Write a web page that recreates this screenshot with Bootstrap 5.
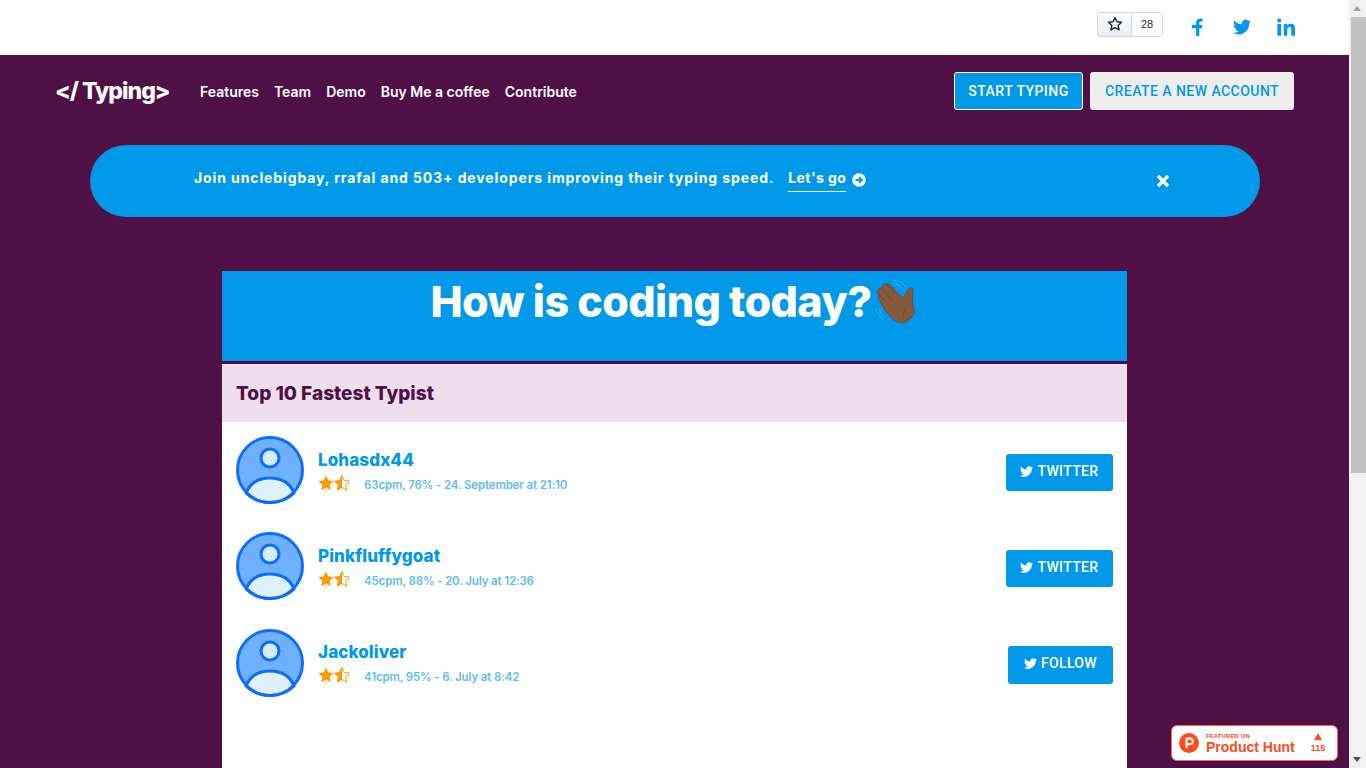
<!DOCTYPE html>
<html lang="en">
<head>
<meta charset="utf-8">
<title>Typing</title>
<link href="https://cdn.jsdelivr.net/npm/bootstrap@5.3.0/dist/css/bootstrap.min.css" rel="stylesheet">
<style>
body{background:#4f1046;font-family:Inter,"Liberation Sans",sans-serif;min-height:1236px}
.top-strip{height:55px;background:#fff;padding-right:71px}
.gh-widget{height:25px;width:66px;border:1px solid #d5d9dd;border-radius:3px;overflow:hidden;margin-right:25px;margin-top:-7px;font-family:"Liberation Sans",sans-serif;font-size:11px;color:#24292e}
.gh-star{width:34px;background:linear-gradient(#fafbfc,#e9eef2);border-right:1px solid #d5d9dd}
.gh-count{flex:1;background:#fff}
.social{width:18px;height:18px;fill:#0099ea}
.social-wrap{gap:26.5px;margin-top:-1px}
.main-nav{height:72px;padding:0 72px 0 55px}
.brand-name{font-family:Inter,sans-serif;font-weight:800;font-size:23px;color:#fff;letter-spacing:-1px;width:145px;white-space:nowrap}
.nav-item-link{font-weight:600;font-size:14px;color:#fff;text-decoration:none;white-space:nowrap}
.nav-links{gap:15px}
.cta{font-family:Roboto,sans-serif;font-weight:500;font-size:14px;letter-spacing:.45px;height:38px;border-radius:3px;display:flex;align-items:center;justify-content:center;text-decoration:none}
.cta-start{width:129px;background:#0099ea;border:1px solid #fff;color:#fff}
.cta-new{width:204px;background:#eeeeee;color:#0099ea;margin-left:7px}
.promo{margin:18px 0 0 90px;width:1170px;height:72px;background:#0099ea;border-radius:36px;color:#fff;padding-left:104px;position:relative}
.promo-text{font-weight:700;font-size:14px;letter-spacing:.89px;white-space:nowrap;margin-top:-3px}
.promo-link{display:inline-block;margin-left:10px;border-bottom:1px solid #fff;padding-bottom:3px;color:#fff;text-decoration:none;width:58px;white-space:nowrap;letter-spacing:.45px}
.promo-arrow{margin-left:2px;vertical-align:-4px}
.promo-close{position:absolute;left:1066px;top:29px;width:14px;height:14px}
.board{width:905px;margin:54px 0 0 222px;background:#fff;min-height:900px}
.board-head{height:90px;background:#0099ea;color:#fff;padding-top:5px}
.board-title{font-family:Inter,sans-serif;font-weight:800;font-size:43px;line-height:50px;letter-spacing:-.6px;margin:0;white-space:nowrap}
.wave{width:44px;height:46px;margin:2px 0 0 3px;flex:none}
.board-sep{height:3px;background:#470d4c}
.board-sub{height:58px;background:#efdeec;color:#4f1046;padding:2px 0 0 14px;font-weight:800;font-size:19px;letter-spacing:0}
.typist{height:96.3px;padding:0 14px}
.typist-avatar{width:68px;height:68px;flex:none;margin-right:14px}
.typist-name{color:#0099ea;font-weight:800;font-size:17px;line-height:22px;letter-spacing:.1px}
.typist-meta{color:#5fbcee;font-weight:600;font-size:11.5px;line-height:1;letter-spacing:-.14px;margin:5px 0 0 14px;white-space:nowrap}
.stars{width:32px;height:17px}
.tw-btn{font-family:Roboto,sans-serif;font-weight:500;font-size:14px;letter-spacing:.35px;height:37px;border-radius:3px;background:#0099ea;color:#fff;text-decoration:none;gap:4px;margin-top:4px;padding-bottom:2px}
.tw-twitter{width:107px}
.tw-follow{width:105px;height:38px}
.tw-icon{width:13px;height:13px;fill:#fff}
.ph-badge{position:fixed;left:1171px;top:725px;width:167px;height:36px;background:#fff;border:1px solid #ff6154;border-radius:6px;color:#ff4a1c;font-family:"Liberation Sans",sans-serif;font-weight:700}
.ph-logo{width:20px;height:20px;margin-left:7px;margin-right:7px;flex:none}
.ph-small{font-size:6px;line-height:7px;letter-spacing:.1px}
.ph-big{font-size:14px;line-height:14px;white-space:nowrap}
.ph-vote{font-size:9px;margin-left:16px;line-height:10px}
.ph-tri{width:0;height:0;border-left:4.5px solid transparent;border-right:4.5px solid transparent;border-bottom:7px solid #ff4a1c;margin:0 auto 3px}
.fake-scroll{position:fixed;top:0;right:0;bottom:0;width:17px;background:#f1f1f1}
.fake-thumb{position:absolute;top:17px;left:2px;right:0;height:456px;background:#c1c1c1}
.fake-up{position:absolute;top:6px;left:4px;border-left:4.500px solid transparent;border-right:4.500px solid transparent;border-bottom:5px solid #a3a3a3}
.fake-down{position:absolute;bottom:6px;left:4px;border-left:4.500px solid transparent;border-right:4.500px solid transparent;border-top:5px solid #505050}
</style>
</head>
<body>
<div class="top-strip d-flex justify-content-end align-items-center">
  <div class="gh-widget d-flex">
    <div class="gh-star d-flex align-items-center justify-content-center">
      <svg width="16" height="16" viewBox="0 0 16 16"><path d="M8 1.6l1.9 4.2 4.6.5-3.4 3.1 1 4.5L8 11.6l-4.1 2.3 1-4.5L1.5 6.3l4.6-.5z" fill="none" stroke="#24292e" stroke-width="1.4" stroke-linejoin="round"/></svg>
    </div>
    <div class="gh-count d-flex align-items-center justify-content-center">28</div>
  </div>
  <div class="social-wrap d-flex align-items-center">
    <svg class="social" viewBox="0 0 24 24"><path d="M15 24V13.5h3.600l.6-4.200H15V6.700c0-1.200.4-2 2.100-2h2.200V.9C18.900.8 17.600.7 16.200.7c-3.200 0-5.400 2-5.400 5.500v3.100H5.200v4.200h5.600V24z"/></svg>
    <svg class="social" viewBox="0 0 24 24"><path d="M24 4.600c-.9.400-1.800.7-2.800.8 1-.6 1.800-1.600 2.200-2.700-1 .6-2 1-3.100 1.200a4.900 4.900 0 0 0-8.400 4.500C7.800 8.200 4.100 6.200 1.700 3.200c-1.300 2.200-.7 5.100 1.500 6.600-.8 0-1.600-.2-2.200-.6 0 2.300 1.600 4.500 4 5-.7.200-1.500.2-2.200.1.600 2 2.500 3.400 4.600 3.400A9.900 9.900 0 0 1 0 19.700 14 14 0 0 0 21.500 7.300c1-.7 1.900-1.600 2.500-2.700z"/></svg>
    <svg class="social" viewBox="0 0 24 24"><path d="M.5 8h5v15.500h-5zM3 .5a2.800 2.800 0 1 1 0 5.600A2.800 2.800 0 0 1 3 .5zM9 8h4.700v2.100c.7-1.300 2.300-2.500 4.700-2.500 5 0 5.600 3.300 5.600 7.500v8.400h-5v-7.500c0-1.800 0-4.100-2.500-4.100s-2.800 2-2.800 4v7.600H9z"/></svg>
  </div>
</div>

<nav class="main-nav d-flex align-items-center">
  <div class="brand-name">&lt;/ Typing&gt;</div>
  <div class="nav-links d-flex">
    <a class="nav-item-link" href="#">Features</a>
    <a class="nav-item-link" href="#">Team</a>
    <a class="nav-item-link" href="#">Demo</a>
    <a class="nav-item-link" href="#">Buy Me a coffee</a>
    <a class="nav-item-link" href="#">Contribute</a>
  </div>
  <div class="ms-auto d-flex">
    <a class="cta cta-start" href="#">START TYPING</a>
    <a class="cta cta-new" href="#">CREATE A NEW ACCOUNT</a>
  </div>
</nav>

<div class="promo d-flex align-items-center">
  <div class="promo-text">Join unclebigbay, rrafal and 503+ developers improving their typing speed. <a class="promo-link" href="#">Let's go</a>
    <svg class="promo-arrow" width="14" height="14" viewBox="0 0 14 14"><circle cx="7" cy="7" r="6.800" fill="#fff"/><path d="M3.500 7h6M7 4.200L9.800 7 7 9.800" fill="none" stroke="#0099ea" stroke-width="2"/></svg>
  </div>
  <svg class="promo-close" viewBox="0 0 14 14"><path d="M2 2l10 10M12 2L2 12" stroke="#fff" stroke-width="3.200"/></svg>
</div>

<main class="board">
  <div class="board-head d-flex justify-content-center align-items-start">
    <h1 class="board-title">How is coding today?</h1>
    <svg class="wave" viewBox="0 0 44 46">
      <path d="M15.700 2C22 2 28 5 30.700 9M.7 30.300C2 35 5 39 9 42M18 5.500C21.500 6 25 8 27 10.500M4 31C5 34 7 37 9.500 38.500" fill="none" stroke="#2bb5d8" stroke-width="1"/>
      <path d="M2.500 14C3 11 5 10 6.500 10 7 7 10 5 12.500 6 14 6 15 7 16 8L26 18.500C28 20 29 19 30 17 31.500 14 33 10.500 35.500 10 37.500 9.500 38 11 38 13 37.500 19 37 24 38 28 39 31 40 32 39.500 34 38.500 38 34 43 29 44.500 24 45 20 43 17 40 13 36 9 31 7 27 5 24 3.500 19 2.500 14z" fill="#85593a" stroke="#6b4528" stroke-width=".8"/>
      <path d="M6.500 10L17 21.500M3.500 16L13 25.500M12 6.500L21.500 17M31 30C29 33 28 35 28 38" fill="none" stroke="#6b4528" stroke-width=".8"/>
    </svg>
  </div>
  <div class="board-sep"></div>
  <div class="board-sub d-flex align-items-center">Top 10 Fastest Typist</div>

  <div class="typist d-flex align-items-center">
    <svg class="typist-avatar" viewBox="0 0 68 68"><circle cx="34" cy="34" r="32.500" fill="#6fb1ff"/><path d="M10 57c4-10 13-15 24-15s20 5 24 15c-6 6-15 9.500-24 9.500S16 63 10 57z" fill="#e0f1fe" stroke="#0d6efd" stroke-width="3"/><circle cx="34" cy="22" r="9" fill="#d7edfe" stroke="#0d6efd" stroke-width="3"/><circle cx="34" cy="34" r="32.500" fill="none" stroke="#0d6efd" stroke-width="3"/></svg>
    <div>
      <div class="typist-name">Lohasdx44</div>
      <div class="d-flex align-items-center mt-1">
        <svg class="stars" viewBox="0 0 32 17"><path d="M8 .5l2.300 5 5.400.6-4 3.700 1.100 5.400L8 12.500l-4.800 2.700 1.100-5.400-4-3.700 5.400-.6z" fill="#ff9800"/><path d="M24 .5l2.300 5 5.200.6-3.900 3.700 1 5.200L24 12.500l-4.600 2.500 1-5.200-3.900-3.700 5.200-.6z" fill="#fff" stroke="#ff9800"/><path d="M24 .5v12l-4.600 2.500 1-5.200-3.900-3.700 5.200-.6z" fill="#ff9800"/></svg>
        <span class="typist-meta">63cpm, 76% - 24. September at 21:10</span>
      </div>
    </div>
    <a class="tw-btn tw-twitter ms-auto d-flex align-items-center justify-content-center" href="#"><svg class="tw-icon" viewBox="0 0 24 24"><path d="M24 4.600c-.9.400-1.800.7-2.800.8 1-.6 1.800-1.600 2.200-2.700-1 .6-2 1-3.100 1.200a4.900 4.900 0 0 0-8.400 4.500C7.800 8.200 4.100 6.200 1.700 3.200c-1.300 2.200-.7 5.100 1.500 6.600-.8 0-1.600-.2-2.200-.6 0 2.300 1.600 4.500 4 5-.7.200-1.500.2-2.200.1.600 2 2.500 3.400 4.600 3.400A9.900 9.900 0 0 1 0 19.700 14 14 0 0 0 21.500 7.300c1-.7 1.900-1.600 2.500-2.700z"/></svg>TWITTER</a>
  </div>

  <div class="typist d-flex align-items-center">
    <svg class="typist-avatar" viewBox="0 0 68 68"><circle cx="34" cy="34" r="32.500" fill="#6fb1ff"/><path d="M10 57c4-10 13-15 24-15s20 5 24 15c-6 6-15 9.500-24 9.500S16 63 10 57z" fill="#e0f1fe" stroke="#0d6efd" stroke-width="3"/><circle cx="34" cy="22" r="9" fill="#d7edfe" stroke="#0d6efd" stroke-width="3"/><circle cx="34" cy="34" r="32.500" fill="none" stroke="#0d6efd" stroke-width="3"/></svg>
    <div>
      <div class="typist-name">Pinkfluffygoat</div>
      <div class="d-flex align-items-center mt-1">
        <svg class="stars" viewBox="0 0 32 17"><path d="M8 .5l2.300 5 5.400.6-4 3.700 1.100 5.400L8 12.500l-4.800 2.700 1.100-5.400-4-3.700 5.400-.6z" fill="#ff9800"/><path d="M24 .5l2.300 5 5.200.6-3.900 3.700 1 5.200L24 12.500l-4.600 2.500 1-5.200-3.900-3.700 5.200-.6z" fill="#fff" stroke="#ff9800"/><path d="M24 .5v12l-4.600 2.500 1-5.200-3.900-3.700 5.200-.6z" fill="#ff9800"/></svg>
        <span class="typist-meta">45cpm, 88% - 20. July at 12:36</span>
      </div>
    </div>
    <a class="tw-btn tw-twitter ms-auto d-flex align-items-center justify-content-center" href="#"><svg class="tw-icon" viewBox="0 0 24 24"><path d="M24 4.600c-.9.400-1.800.7-2.800.8 1-.6 1.800-1.600 2.200-2.700-1 .6-2 1-3.100 1.200a4.900 4.900 0 0 0-8.400 4.500C7.800 8.200 4.100 6.200 1.700 3.200c-1.300 2.200-.7 5.100 1.500 6.600-.8 0-1.600-.2-2.200-.6 0 2.300 1.600 4.500 4 5-.7.200-1.500.2-2.200.1.600 2 2.500 3.400 4.600 3.400A9.900 9.900 0 0 1 0 19.700 14 14 0 0 0 21.500 7.300c1-.7 1.900-1.600 2.500-2.700z"/></svg>TWITTER</a>
  </div>

  <div class="typist d-flex align-items-center">
    <svg class="typist-avatar" viewBox="0 0 68 68"><circle cx="34" cy="34" r="32.500" fill="#6fb1ff"/><path d="M10 57c4-10 13-15 24-15s20 5 24 15c-6 6-15 9.500-24 9.500S16 63 10 57z" fill="#e0f1fe" stroke="#0d6efd" stroke-width="3"/><circle cx="34" cy="22" r="9" fill="#d7edfe" stroke="#0d6efd" stroke-width="3"/><circle cx="34" cy="34" r="32.500" fill="none" stroke="#0d6efd" stroke-width="3"/></svg>
    <div>
      <div class="typist-name">Jackoliver</div>
      <div class="d-flex align-items-center mt-1">
        <svg class="stars" viewBox="0 0 32 17"><path d="M8 .5l2.300 5 5.400.6-4 3.700 1.100 5.400L8 12.500l-4.800 2.700 1.100-5.400-4-3.700 5.400-.6z" fill="#ff9800"/><path d="M24 .5l2.300 5 5.200.6-3.900 3.700 1 5.200L24 12.500l-4.600 2.500 1-5.200-3.900-3.700 5.200-.6z" fill="#fff" stroke="#ff9800"/><path d="M24 .5v12l-4.600 2.500 1-5.200-3.900-3.700 5.200-.6z" fill="#ff9800"/></svg>
        <span class="typist-meta">41cpm, 95% - 6. July at 8:42</span>
      </div>
    </div>
    <a class="tw-btn tw-follow ms-auto d-flex align-items-center justify-content-center" href="#"><svg class="tw-icon" viewBox="0 0 24 24"><path d="M24 4.600c-.9.400-1.800.7-2.800.8 1-.6 1.800-1.600 2.200-2.700-1 .6-2 1-3.100 1.200a4.900 4.900 0 0 0-8.400 4.500C7.800 8.200 4.100 6.200 1.700 3.200c-1.300 2.200-.7 5.100 1.500 6.600-.8 0-1.600-.2-2.200-.6 0 2.300 1.600 4.500 4 5-.7.200-1.500.2-2.200.1.600 2 2.500 3.400 4.600 3.400A9.900 9.900 0 0 1 0 19.700 14 14 0 0 0 21.500 7.300c1-.7 1.900-1.600 2.500-2.700z"/></svg>FOLLOW</a>
  </div>
</main>

<a class="ph-badge d-flex align-items-center text-decoration-none" href="#">
  <svg class="ph-logo" viewBox="0 0 20 20"><circle cx="10" cy="10" r="10" fill="#ff4a1c"/><path d="M7.500 15V5.500h3.500a2.800 2.800 0 0 1 0 5.700H7.500" fill="none" stroke="#fff" stroke-width="2"/></svg>
  <div><div class="ph-small">FEATURED ON</div><div class="ph-big">Product Hunt</div></div>
  <div class="ph-vote text-center"><div class="ph-tri"></div>115</div>
</a>
<div class="fake-scroll"><div class="fake-up"></div><div class="fake-thumb"></div><div class="fake-down"></div></div>
<script src="https://cdn.jsdelivr.net/npm/bootstrap@5.3.0/dist/js/bootstrap.bundle.min.js"></script>
</body>
</html>
